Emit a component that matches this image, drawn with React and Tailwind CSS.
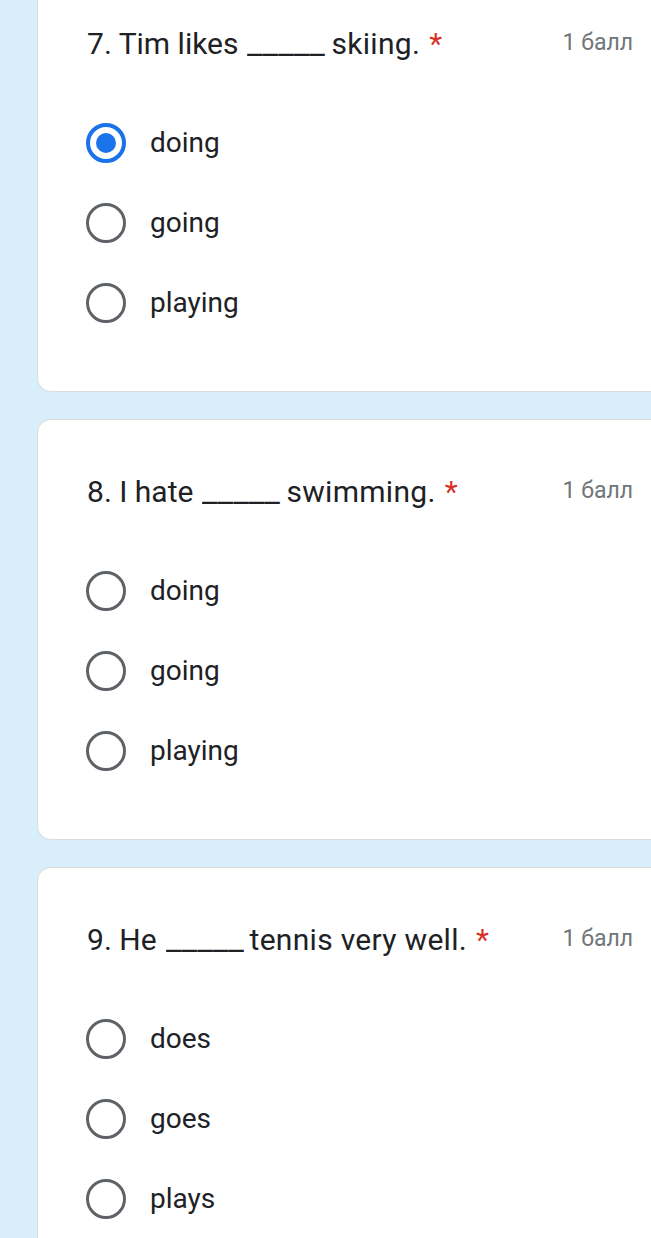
import React, { useState } from "react";

const questions = [
    { id: 7, before: "Tim likes", after: "skiing.", options: ["doing", "going", "playing"], selected: 0 },
    { id: 8, before: "I hate", after: "swimming.", options: ["doing", "going", "playing"], selected: null },
    { id: 9, before: "He", after: "tennis very well.", options: ["does", "goes", "plays"], selected: null },
];

function Radio({ checked }) {
    if (checked) {
        return (
            <span className="flex items-center justify-center w-[40px] h-[40px] rounded-full border-[4px] border-[#1a73e8]">
                <span className="w-[20px] h-[20px] rounded-full bg-[#1a73e8]"></span>
            </span>
        );
    }
    return <span className="block w-[40px] h-[40px] rounded-full border-[3.5px] border-[#5f6368]"></span>;
}

function Question({ q, first }) {
    const [value, setValue] = useState(q.selected);

    return (
        <div
            className={`bg-white border border-r-0 border-[#dadce0] rounded-l-[14px] pt-[51px] pb-[48px] ${first ? "-mt-[29px]" : ""}`}
        >
            <div className="flex items-center justify-between h-[40px] pl-[49px] pr-[18px]">
                <h2 className="flex items-baseline text-[30px] text-[#202124] whitespace-nowrap">
                    <span>{q.id}. {q.before}</span>
                    <span className="ml-[9px] mr-[8px] w-[76px]">
                        <span className="inline-block origin-left scale-x-[1.15]">_____</span>
                    </span>
                    <span className="tracking-[0.3px]">{q.after}</span>
                    <span className="ml-[9px] text-[#d93025]">*</span>
                </h2>
                <span className="text-[23px] text-[#70757a]">1 балл</span>
            </div>

            <div className="mt-[40px] flex flex-col">
                {q.options.map((opt, index) => (
                    <label
                        key={index}
                        className="flex items-center h-[80px] pl-[48px] cursor-pointer"
                        onClick={() => setValue(index)}
                    >
                        <Radio checked={value === index} />
                        <span className="ml-[24px] text-[28px] text-[#202124]">{opt}</span>
                    </label>
                ))}
            </div>
        </div>
    );
}

export default function App() {
    return (
        <div
            className="min-h-[1238px] bg-[#d8eefa] overflow-hidden pl-[37px] flex flex-col gap-[27px]"
            style={{ fontFamily: "Roboto, 'Liberation Sans', sans-serif" }}
        >
            {questions.map((q, i) => (
                <Question key={q.id} q={q} first={i === 0} />
            ))}
        </div>
    );
}
